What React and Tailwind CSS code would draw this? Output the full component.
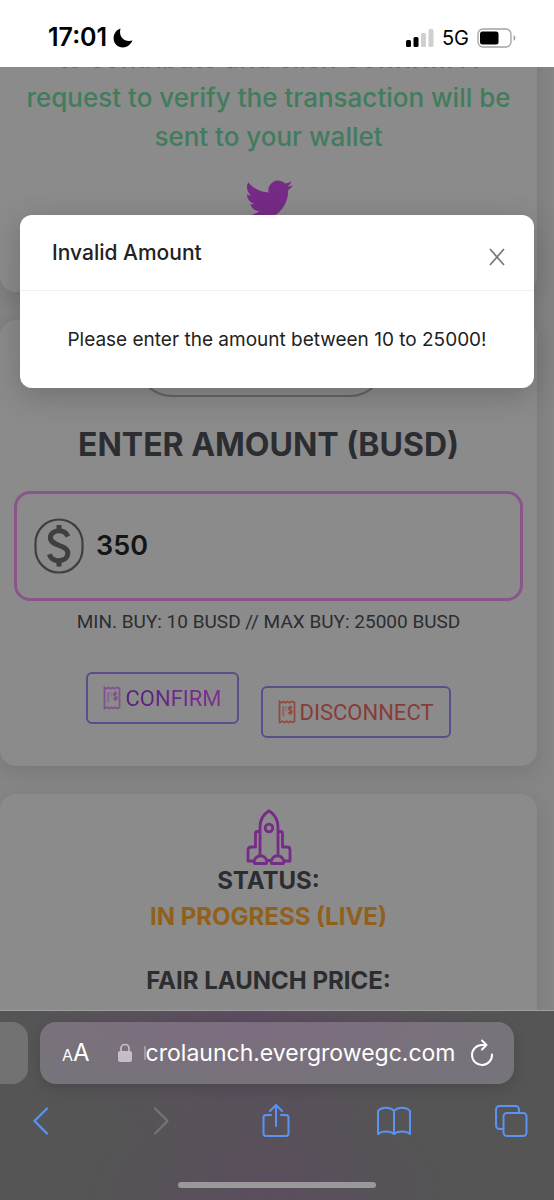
import React from "react";

function Receipt({ className }) {
  return (
    <svg viewBox="0 0 18 24" className={`h-6 w-[18px] ${className}`} fill="none" stroke="currentColor" strokeWidth="1.8" aria-hidden="true">
      <path d="M1.5 1.5l2 1.3 2-1.3 2 1.3 2-1.3 2 1.3 2-1.3 3 1v19l-2 1-2-1.3-2 1.3-2-1.3-2 1.3-2-1.3-3 1.3z" />
      <path d="M14 8c-.6-1.400-3.600-1.200-3.400.7.2 1.700 3.500 1.300 3.500 3.100 0 1.900-3 1.900-3.700.3M12.300 5.500v9.500" strokeWidth="1.600" />
      <path d="M5.200 6v10.500" strokeWidth="2" opacity="0.6" />
      <path d="M8 6v5" strokeWidth="1" opacity="0.6" />
    </svg>
  );
}

function StatusBar() {
  return (
    <header className="flex h-[67px] shrink-0 items-center justify-between bg-white pt-2 pr-[37px] pl-12 text-black">
      <div className="flex items-center gap-1.5">
        <time className="font-['Inter'] text-[25px] font-semibold">17:01</time>
        <svg viewBox="0 0 20 20" className="h-5 w-5" fill="currentColor" aria-hidden="true">
          <path d="M7.500.5C5.400 8.500 10.500 14.600 19.500 12.600 17.300 17.400 13.700 19.500 10 19.500 4.500 19.500.6 15.400.6 10.200.6 6 3.200 2 7.500.5z" />
        </svg>
      </div>
      <div className="flex items-center gap-2">
        <svg viewBox="0 0 28 18" className="h-[18px] w-7" aria-hidden="true">
          <rect x="0" y="11" width="5" height="7" rx="1.500" />
          <rect x="7.500" y="8" width="5" height="10" rx="1.500" />
          <rect x="15" y="4" width="5" height="14" rx="1.500" fill="#d0d0d0" />
          <rect x="22.500" y="0" width="5" height="18" rx="1.500" fill="#d0d0d0" />
        </svg>
        <span className="font-['Inter'] text-xl">5G</span>
        <svg viewBox="0 0 40 20" className="h-5 w-10" aria-hidden="true">
          <rect x="1" y="1" width="33" height="18" rx="5" fill="none" stroke="#a3a3a3" strokeWidth="1.300" />
          <rect x="3" y="3.500" width="18.500" height="13" rx="2.500" />
          <path d="M36.500 7v6q2-.8 2-3t-2-3z" fill="#a3a3a3" />
        </svg>
      </div>
    </header>
  );
}

function Dialog() {
  return (
    <section role="dialog" aria-labelledby="dialog-title" className="absolute inset-x-5 top-[148px] rounded-xl bg-white font-['Inter'] text-[#222] shadow-[0_8px_32px_rgba(0,0,0,0.2)]">
      <div className="flex h-[76px] items-center justify-between border-b border-[#efefef] pr-7 pl-8">
        <h2 id="dialog-title" className="text-[21px] font-medium">Invalid Amount</h2>
        <button type="button" aria-label="Close" className="mt-2 text-[#777]">
          <svg viewBox="0 0 18 18" className="h-[18px] w-[18px]" fill="none" stroke="currentColor" strokeWidth="1.700" aria-hidden="true">
            <path d="M2 1l14 16M16 1L2 17" />
          </svg>
        </button>
      </div>
      <p className="pt-[37px] pb-9 text-center text-[19px] leading-6">Please enter the amount between 10 to 25000!</p>
    </section>
  );
}

const card = "bg-[#8b8b8b] shadow-[0_6px_18px_rgba(0,0,0,0.1)] text-center";
const navButton = "flex w-[34px] justify-center";

function BrowserBar() {
  return (
    <footer className="flex shrink-0 flex-col border-t border-[#a0a0a0] bg-[#555] bg-[radial-gradient(ellipse_at_45%_0%,#5d4c60_0%,transparent_55%),radial-gradient(ellipse_at_48%_100%,#5b4d5e_0%,transparent_45%)] font-['Inter']">
      <div className="flex h-[84px] items-center">
        <div className="h-[62px] w-7 rounded-r-2xl bg-[#727272]" />
        <div className="mr-10 ml-3 flex h-[62px] flex-1 items-center rounded-2xl bg-[#77737a] bg-[radial-gradient(ellipse_at_45%_0%,#7d6c80_0%,transparent_70%)] pr-5 pl-[22px] text-white shadow-[0_4px_14px_rgba(0,0,0,0.15)]">
          <button type="button" aria-label="Page settings" className="flex items-baseline">
            <span className="text-base">A</span>
            <span className="text-2xl">A</span>
          </button>
          <svg viewBox="0 0 14 20" className="mr-3 ml-7 h-5 w-3.5 text-[#c5bdca]" aria-hidden="true">
            <rect x="0" y="8" width="14" height="11" rx="2" fill="currentColor" />
            <path d="M3 9V5.500a4 4 0 0 1 8 0V9" fill="none" stroke="currentColor" strokeWidth="1.700" />
          </svg>
          <span className="h-3.5 w-0.5 bg-[#a39aa6]" />
          <span className="flex-1 text-[23px]">crolaunch.evergrowegc.com</span>
          <button type="button" aria-label="Reload">
            <svg viewBox="0 0 24 28" className="h-7 w-6" fill="none" stroke="currentColor" strokeWidth="2" strokeLinecap="round" strokeLinejoin="round" aria-hidden="true">
              <path d="M22 15.500A10 10 0 1 1 12 6h4M12 1.500L16.500 6 12 10.500" />
            </svg>
          </button>
        </div>
      </div>
      <nav className="flex h-[52px] items-center justify-between pr-[26px] pl-6 text-[#5b93f5]">
        <button type="button" aria-label="Back" className={navButton}>
          <svg viewBox="0 0 30 34" className="h-[34px] w-[30px]" fill="none" stroke="currentColor" strokeWidth="2.200" strokeLinecap="round" strokeLinejoin="round" aria-hidden="true"><path d="M21 4.500L8.500 17 21 29.500" /></svg>
        </button>
        <button type="button" aria-label="Forward" disabled className={`${navButton} text-[#747474]`}>
          <svg viewBox="0 0 30 34" className="h-[34px] w-[30px]" fill="none" stroke="currentColor" strokeWidth="2.200" strokeLinecap="round" strokeLinejoin="round" aria-hidden="true"><path d="M11 4.500L23.500 17 11 29.500" /></svg>
        </button>
        <button type="button" aria-label="Share" className={navButton}>
          <svg viewBox="0 0 30 34" className="h-[34px] w-[30px]" fill="none" stroke="currentColor" strokeWidth="2" strokeLinecap="round" strokeLinejoin="round" aria-hidden="true"><path d="M10 11H5a2.500 2.500 0 0 0-2.500 2.500v16A2.500 2.500 0 0 0 5 32h20a2.500 2.500 0 0 0 2.500-2.500v-16A2.500 2.500 0 0 0 25 11h-5M15 22V1M9 7l6-6 6 6" /></svg>
        </button>
        <button type="button" aria-label="Bookmarks" className={navButton}>
          <svg viewBox="0 0 34 30" className="h-[30px] w-[34px]" fill="none" stroke="currentColor" strokeWidth="2" strokeLinejoin="round" aria-hidden="true"><path d="M17 5C13 .8 5 .8 1 5v23c4-3.500 12-3.500 16 0 4-3.500 12-3.500 16 0V5c-4-4.200-12-4.200-16 0zv23" /></svg>
        </button>
        <button type="button" aria-label="Tabs" className={navButton}>
          <svg viewBox="0 0 34 34" className="h-[34px] w-[34px]" fill="none" stroke="currentColor" strokeWidth="2" strokeLinejoin="round" aria-hidden="true"><path d="M9.500 25H5.500a3.500 3.500 0 0 1-3.500-3.500v-16A3.500 3.500 0 0 1 5.500 2h16A3.500 3.500 0 0 1 25 5.500V9" /><rect x="9.500" y="9" width="23" height="23" rx="3.500" /></svg>
        </button>
      </nav>
      <div className="flex h-[53px] items-end justify-center pb-3">
        <div className="h-1.5 w-[198px] rounded-full bg-[#999]" />
      </div>
    </footer>
  );
}

export default function App() {
  return (
    <div className="flex min-h-screen flex-col bg-[#858585]">
      <StatusBar />
      <main className="relative flex-1 overflow-hidden bg-[#858585]">
        <div className="mr-[17px] flex flex-col gap-7">
          <section className={`${card} -mt-8 flex flex-col items-center rounded-b-2xl pb-[68px]`}>
            <p className="px-5 pt-1 font-['Inter'] text-[26px] leading-[39px] font-medium whitespace-nowrap text-[#417c5d]">
              to contribute and click <b>Confirm</b>. A<br />request to verify the transaction will be<br />sent to your wallet
            </p>
            <svg viewBox="0 0 24 24" className="mt-5 h-12 w-12 text-[#762b87]" fill="currentColor" aria-hidden="true">
              <path d="M23.950 4.570a10 10 0 0 1-2.820.77 4.960 4.960 0 0 0 2.160-2.720c-.95.550-2 .960-3.130 1.190a4.920 4.920 0 0 0-8.380 4.480C7.690 8.090 4.070 6.130 1.640 3.160a4.820 4.820 0 0 0-.67 2.480c0 1.710.87 3.210 2.190 4.090a4.900 4.900 0 0 1-2.230-.61v.06a4.920 4.920 0 0 0 3.950 4.830 5 5 0 0 1-2.210.08 4.940 4.940 0 0 0 4.600 3.420A9.870 9.870 0 0 1 0 19.540a14 14 0 0 0 7.550 2.210c9.050 0 14-7.500 14-13.980 0-.21 0-.42-.02-.63a9.940 9.940 0 0 0 2.460-2.550z" />
            </svg>
          </section>
          <section className={`${card} rounded-2xl px-3.5 pb-7`}>
            <div className="pr-4">
              <div className="mx-auto h-[77px] w-[250px] rounded-[36px] border-2 border-[#656565]" />
            </div>
            <h1 className="mt-6 font-['Inter'] text-[32px] leading-[48px] font-bold text-[#2b2d31]">
              <label htmlFor="amount">ENTER AMOUNT (BUSD)</label>
            </h1>
            <div className="mt-[22px] flex h-[110px] items-center gap-3 rounded-2xl border-3 border-[#8a5689] px-[17px]">
              <svg viewBox="0 0 50 56" className="h-14 w-[50px] shrink-0 text-[#3f3f3f]" fill="none" stroke="currentColor" aria-hidden="true">
                <rect x="1.500" y="1.500" width="47" height="53" rx="23.500" strokeWidth="2.200" />
                <path d="M34 18.500c-1.800-4-5-5.800-9-5.800-5 0-8.600 3-8.600 6.900 0 9.200 17.400 6.600 17.400 15.400 0 4.800-4 7.700-9 7.700-4.500 0-8-2.200-9.500-6.500M25 7v6M25 42v6.500" strokeWidth="5" />
              </svg>
              <input id="amount" type="text" inputMode="numeric" defaultValue="350" className="w-full min-w-0 bg-transparent font-['Inter'] text-[27px] font-semibold text-[#151515] outline-none" />
            </div>
            <p className="mt-[7px] font-['Roboto'] text-[19px] leading-7 text-[#2b2d31]">MIN. BUY: 10 BUSD // MAX BUY: 25000 BUSD</p>
            <div className="mt-9 flex items-start justify-center gap-[22px] font-['Roboto'] text-[22px]">
              <button type="button" className="flex h-[52px] items-center gap-1 rounded-md border-2 border-[#5d4b8c] px-[15px] text-[#70278c]">
                <Receipt className="text-[#825290]" />
                <span className="bg-linear-to-r from-[#54207a] to-[#823090] bg-clip-text text-transparent">CONFIRM</span>
              </button>
              <button type="button" className="mt-3.5 flex h-[52px] items-center gap-1 rounded-md border-2 border-[#5d4b8c] px-[15px] text-[#863c38]">
                <Receipt className="text-[#934a43]" />
                DISCONNECT
              </button>
            </div>
          </section>
          <section className={`${card} flex flex-col items-center rounded-t-2xl pt-[15px] pb-[11px] font-['Inter'] text-2xl leading-9 font-bold text-[#2b2d31]`}>
            <svg viewBox="0 0 46 56" className="-mb-0.5 h-14 w-[46px] text-[#772b88]" fill="none" stroke="currentColor" strokeWidth="2.800" strokeLinejoin="round" aria-hidden="true">
              <path d="M14 46V18C14 11 18 5 23 1.800 28 5 32 11 32 18v28" />
              <circle cx="23" cy="19" r="3.800" />
              <path d="M14 22.500h-2.500q-2 0-2 2V38H5q-3 0-3 3v11h6M32 22.500h2.500q2 0 2 2V38H41q3 0 3 3v11h-6M20.500 51.500h5" />
              <path d="M8.500 54.500a6.200 6.200 0 1 1 12 0zM25.500 54.500a6.200 6.200 0 1 1 12 0z" />
            </svg>
            <p>STATUS:</p>
            <p className="text-[#91601b]">IN PROGRESS (LIVE)</p>
            <h2 className="mt-7">FAIR LAUNCH PRICE:</h2>
          </section>
        </div>
        <Dialog />
      </main>
      <BrowserBar />
    </div>
  );
}
